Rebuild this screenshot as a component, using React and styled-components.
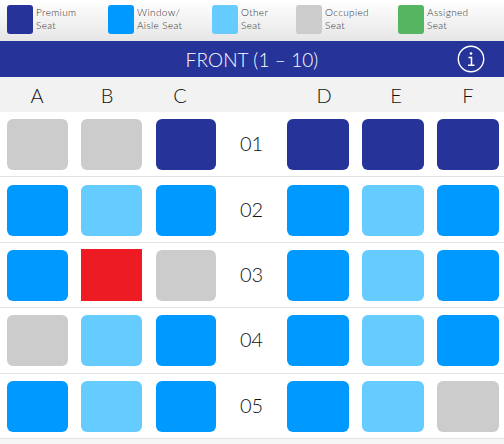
import styled, { createGlobalStyle } from "styled-components";

const COLORS = {
  premium: "#263399",
  window: "#0099ff",
  other: "#66ccff",
  occupied: "#cccccc",
  assigned: "#55b560",
  selected: "#ed1c24",
};

const legend = [
  { type: "premium", width: 101, lines: ["Premium", "Seat"] },
  { type: "window", width: 104, lines: ["Window/", "Aisle Seat"] },
  { type: "other", width: 84, lines: ["Other", "Seat"] },
  { type: "occupied", width: 102, lines: ["Occupied", "Seat"] },
  { type: "assigned", width: 90, lines: ["Assigned", "Seat"] },
];

const rows = [
  { label: "01", left: ["occupied", "occupied", "premium"], right: ["premium", "premium", "premium"] },
  { label: "02", left: ["window", "other", "window"], right: ["window", "other", "window"] },
  { label: "03", left: ["window", "selected", "occupied"], right: ["window", "other", "window"] },
  { label: "04", left: ["occupied", "other", "window"], right: ["window", "other", "window"] },
  { label: "05", left: ["window", "other", "window"], right: ["window", "other", "occupied"] },
];

const GlobalStyle = createGlobalStyle`
  html, body {
    margin: 0;
    background: #fff;
  }
  body {
    font-family: "Lato", "Open Sans", sans-serif;
    font-weight: 300;
  }
`;

const Page = styled.div`
  width: 504px;
  height: 444px;
  overflow: hidden;
  background: #f6f6f6;
`;

const Legend = styled.div`
  display: flex;
  height: 41px;
  box-sizing: border-box;
  padding: 5px 0 0 7px;
  background: linear-gradient(#ffffff, #e6e6e6);
`;

const LegendItem = styled.div`
  display: flex;
  gap: 3px;
  width: ${(props) => props.$width}px;
`;

const Swatch = styled.div`
  width: 26px;
  height: 29px;
  border-radius: 3px;
  background: ${(props) => COLORS[props.$type]};
`;

const LegendText = styled.div`
  padding-top: 1px;
  font-size: 10px;
  line-height: 13px;
  letter-spacing: 0.35px;
  color: #333;
`;

const Banner = styled.div`
  position: relative;
  display: flex;
  align-items: center;
  justify-content: center;
  height: 36px;
  background: ${COLORS.premium};
  color: #fff;
  font-size: 19px;
  letter-spacing: 0.1px;
`;

const InfoButton = styled.svg`
  position: absolute;
  right: 19px;
  top: 4px;
  width: 28px;
  height: 28px;
`;

const ColumnHeader = styled.div`
  display: grid;
  grid-template-columns: 74px 66px 80px 68px 72px 72px 72px;
  align-items: center;
  height: 35px;
  background: #f2f2f2;
  color: #111;
  font-size: 20px;
  text-align: center;
`;

const SeatRow = styled.div`
  display: flex;
  align-items: flex-start;
  height: 65.4px;
  box-sizing: border-box;
  padding: 7.3px 5px 0 7px;
  background: #fff;
  border-bottom: 1px solid #e2e2e2;
`;

const SeatGroup = styled.div`
  display: flex;
  gap: ${(props) => props.$gap}px;
`;

const RowLabel = styled.div`
  width: 70.4px;
  text-align: center;
  font-size: 20px;
  line-height: 49px;
  color: #111;
`;

const Seat = styled.div`
  width: ${(props) => props.$width}px;
  height: ${(props) => (props.$type === "selected" ? "52px" : "51px")};
  margin-top: ${(props) => (props.$type === "selected" ? "-1px" : "0")};
  border-radius: ${(props) => (props.$type === "selected" ? "0" : "6px")};
  background: ${(props) => COLORS[props.$type]};
`;

export default function App() {
  return (
    <Page>
      <GlobalStyle />
      <Legend>
        {legend.map((item) => (
          <LegendItem key={item.type} $width={item.width}>
            <Swatch $type={item.type} />
            <LegendText>
              {item.lines[0]}
              <br />
              {item.lines[1]}
            </LegendText>
          </LegendItem>
        ))}
      </Legend>
      <Banner>
        FRONT (1 – 10)
        <InfoButton viewBox="0 0 28 28" fill="none" stroke="#fff">
          <circle cx="14" cy="14" r="12.7" strokeWidth="1.4" />
          <circle cx="14" cy="8.5" r="1.3" fill="#fff" stroke="none" />
          <path d="M11.5 12.5H14.5V20M11 20.3H17.5" strokeWidth="1.5" />
        </InfoButton>
      </Banner>
      <ColumnHeader>
        <span>A</span>
        <span>B</span>
        <span>C</span>
        <span />
        <span>D</span>
        <span>E</span>
        <span>F</span>
      </ColumnHeader>
      {rows.map((row) => (
        <SeatRow key={row.label}>
          <SeatGroup $gap={13.8}>
            {row.left.map((type, index) => (
              <Seat key={index} $type={type} $width={60.6} />
            ))}
          </SeatGroup>
          <RowLabel>{row.label}</RowLabel>
          <SeatGroup $gap={13}>
            {row.right.map((type, index) => (
              <Seat key={index} $type={type} $width={62} />
            ))}
          </SeatGroup>
        </SeatRow>
      ))}
    </Page>
  );
}
